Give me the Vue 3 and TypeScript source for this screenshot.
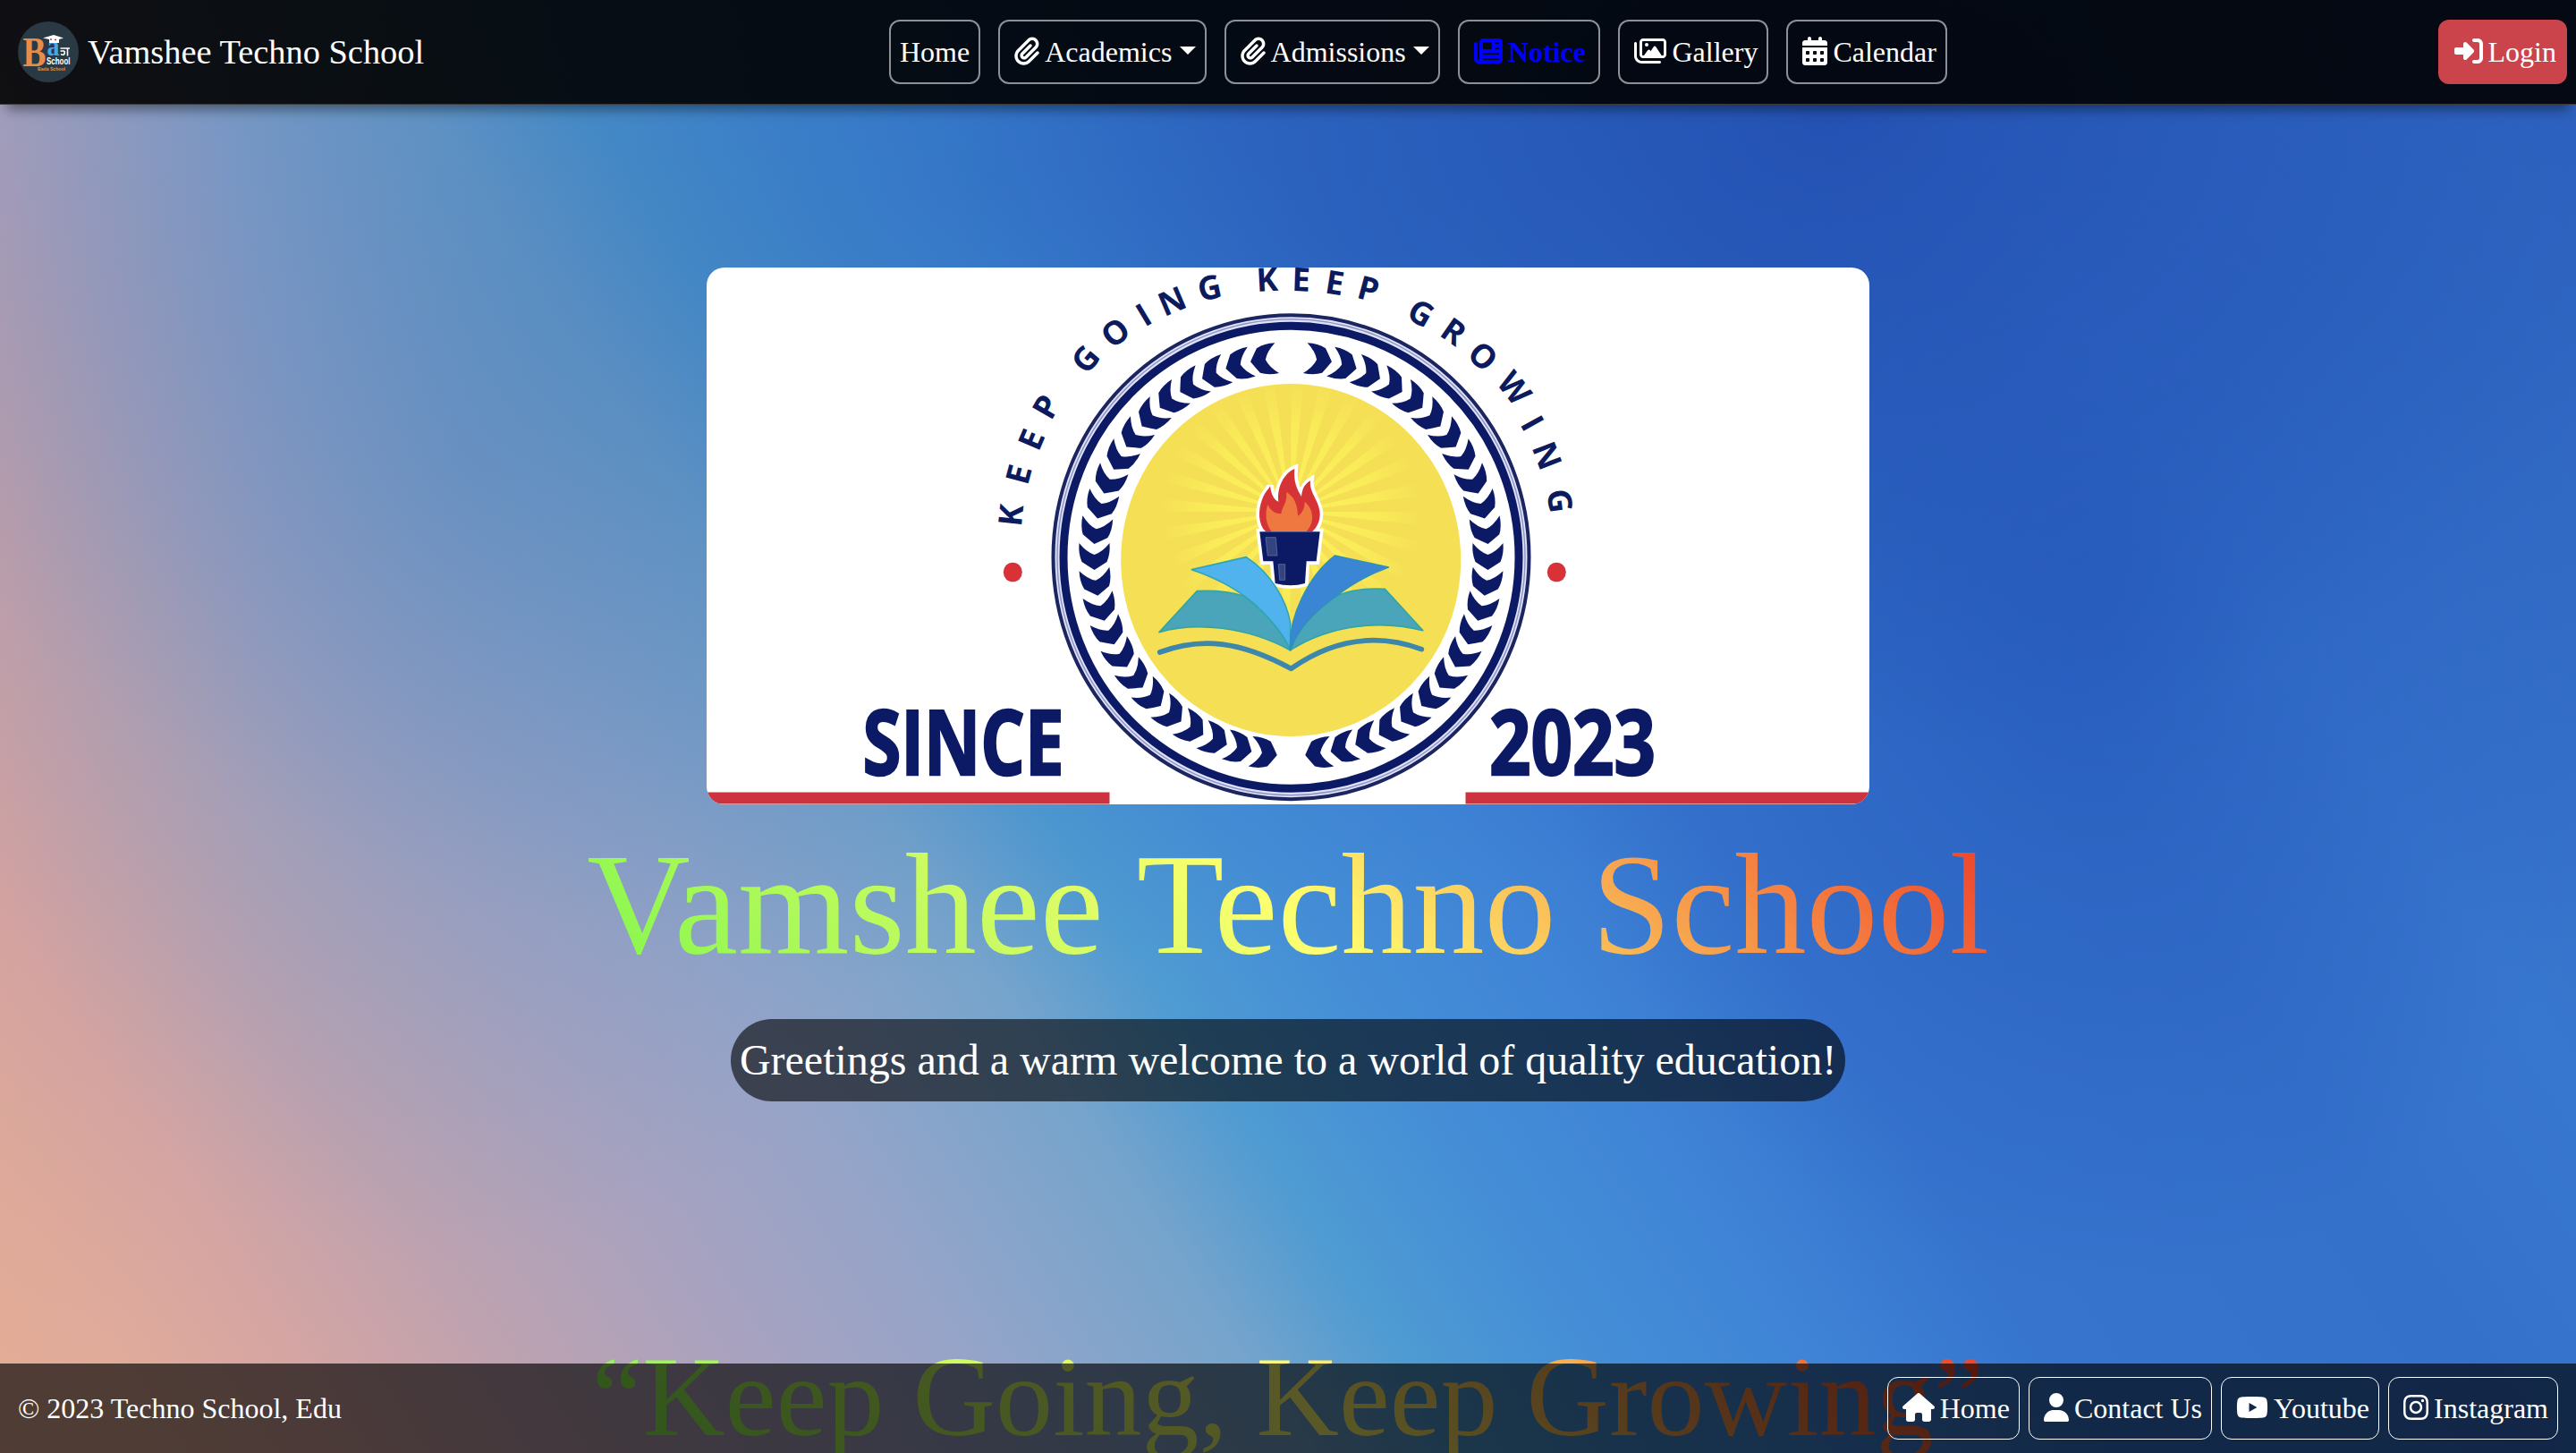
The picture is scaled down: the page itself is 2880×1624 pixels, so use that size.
<script setup lang="ts">
interface IconShape { w: number; d: string }
interface NavItem { label: string; icon?: string; caret?: boolean; notice?: boolean }

const icons: Record<string, IconShape> = {
  clip: { w: 448, d: 'M364.2 83.8c-24.4-24.4-64-24.4-88.4 0l-184 184c-42.1 42.1-42.1 110.3 0 152.4s110.3 42.1 152.4 0l152-152c10.9-10.9 28.7-10.9 39.6 0s10.9 28.7 0 39.6l-152 152c-64 64-167.6 64-231.6 0s-64-167.6 0-231.6l184-184c46.3-46.3 121.3-46.3 167.6 0s46.3 121.3 0 167.6l-176 176c-28.6 28.6-75 28.6-103.6 0s-28.6-75 0-103.6l144-144c10.9-10.9 28.7-10.9 39.6 0s10.9 28.7 0 39.6l-144 144c-6.7 6.7-6.7 17.7 0 24.4s17.7 6.7 24.4 0l176-176c24.4-24.4 24.4-64 0-88.4z' },
  news: { w: 512, d: 'M96 96c0-35.3 28.7-64 64-64H448c35.3 0 64 28.7 64 64V416c0 35.3-28.7 64-64 64H80c-44.2 0-80-35.8-80-80V128c0-17.7 14.3-32 32-32s32 14.3 32 32V400c0 8.8 7.2 16 16 16s16-7.2 16-16V96zm64 24v80c0 13.3 10.7 24 24 24H296c13.3 0 24-10.7 24-24V120c0-13.3-10.7-24-24-24H184c-13.3 0-24 10.7-24 24zm208-8c0 8.8 7.2 16 16 16h48c8.8 0 16-7.2 16-16s-7.2-16-16-16H384c-8.8 0-16 7.2-16 16zm0 96c0 8.8 7.2 16 16 16h48c8.8 0 16-7.2 16-16s-7.2-16-16-16H384c-8.8 0-16 7.2-16 16zM160 304c0 8.8 7.2 16 16 16H432c8.8 0 16-7.2 16-16s-7.2-16-16-16H176c-8.8 0-16 7.2-16 16zm0 96c0 8.8 7.2 16 16 16H432c8.8 0 16-7.2 16-16s-7.2-16-16-16H176c-8.8 0-16 7.2-16 16z' },
  images: { w: 576, d: 'M160 80H512c8.8 0 16 7.2 16 16V320c0 8.8-7.2 16-16 16H490.8L388.1 178.9c-4.4-6.8-12-10.9-20.1-10.9s-15.7 4.1-20.1 10.9l-52.2 79.8-12.4-16.9c-4.5-6.2-11.7-9.8-19.4-9.8s-14.8 3.6-19.4 9.8L175.6 336H160c-8.8 0-16-7.2-16-16V96c0-8.8 7.2-16 16-16zM96 96V320c0 35.3 28.7 64 64 64H512c35.3 0 64-28.7 64-64V96c0-35.3-28.7-64-64-64H160c-35.3 0-64 28.7-64 64zM48 120c0-13.3-10.7-24-24-24S0 106.7 0 120V344c0 75.1 60.9 136 136 136H456c13.3 0 24-10.7 24-24s-10.7-24-24-24H136c-48.6 0-88-39.4-88-88V120zm208 24a32 32 0 1 0 -64 0 32 32 0 1 0 64 0z' },
  calendar: { w: 448, d: 'M128 0c17.7 0 32 14.3 32 32V64H288V32c0-17.7 14.3-32 32-32s32 14.3 32 32V64h48c26.5 0 48 21.5 48 48v48H0V112C0 85.5 21.5 64 48 64H96V32c0-17.7 14.3-32 32-32zM0 192H448V464c0 26.5-21.5 48-48 48H48c-26.5 0-48-21.5-48-48V192zm64 80v32c0 8.8 7.2 16 16 16h32c8.8 0 16-7.2 16-16V272c0-8.8-7.2-16-16-16H80c-8.8 0-16 7.2-16 16zm128 0v32c0 8.8 7.2 16 16 16h32c8.8 0 16-7.2 16-16V272c0-8.8-7.2-16-16-16H208c-8.8 0-16 7.2-16 16zm144-16c-8.8 0-16 7.2-16 16v32c0 8.8 7.2 16 16 16h32c8.8 0 16-7.2 16-16V272c0-8.8-7.2-16-16-16H336zM64 400v32c0 8.8 7.2 16 16 16h32c8.8 0 16-7.2 16-16V400c0-8.8-7.2-16-16-16H80c-8.8 0-16 7.2-16 16zm144-16c-8.8 0-16 7.2-16 16v32c0 8.8 7.2 16 16 16h32c8.8 0 16-7.2 16-16V400c0-8.8-7.2-16-16-16H208zm112 16v32c0 8.8 7.2 16 16 16h32c8.8 0 16-7.2 16-16V400c0-8.8-7.2-16-16-16H336c-8.8 0-16 7.2-16 16z' },
  login: { w: 512, d: 'M217.9 105.9L340.7 228.7c7.2 7.2 11.3 17.1 11.3 27.3s-4.1 20.1-11.3 27.3L217.9 406.1c-6.4 6.4-15 9.9-24 9.9c-18.7 0-33.9-15.2-33.9-33.9l0-62.1L32 320c-17.7 0-32-14.3-32-32l0-64c0-17.7 14.3-32 32-32l128 0 0-62.1c0-18.7 15.2-33.9 33.9-33.9c9 0 17.6 3.6 24 9.9zM352 416l64 0c17.7 0 32-14.3 32-32l0-256c0-17.7-14.3-32-32-32l-64 0c-17.7 0-32-14.3-32-32s14.3-32 32-32l64 0c53 0 96 43 96 96l0 256c0 53-43 96-96 96l-64 0c-17.7 0-32-14.3-32-32s14.3-32 32-32z' },
  house: { w: 576, d: 'M575.8 255.5c0 18-15 32.1-32 32.1h-32l.7 160.2c0 2.7-.2 5.4-.5 8.1V472c0 22.1-17.9 40-40 40H456c-1.1 0-2.2 0-3.3-.1c-1.4 .1-2.8 .1-4.2 .1H416 392c-22.1 0-40-17.9-40-40V448 384c0-17.7-14.3-32-32-32H256c-17.7 0-32 14.3-32 32v64 24c0 22.1-17.9 40-40 40H160 128.1c-1.5 0-3-.1-4.5-.2c-1.2 .1-2.4 .2-3.6 .2H104c-22.1 0-40-17.9-40-40V360c0-.9 0-1.9 .1-2.8V287.6H32c-18 0-32-14-32-32.1c0-9 3-17 10-24L266.4 8c7-7 15-8 22-8s15 2 21 7L564.8 231.5c8 7 12 15 11 24z' },
  user: { w: 448, d: 'M224 256A128 128 0 1 0 224 0a128 128 0 1 0 0 256zm-45.7 48C79.8 304 0 383.8 0 482.3C0 498.7 13.3 512 29.7 512H418.3c16.4 0 29.7-13.3 29.7-29.7C448 383.8 368.2 304 269.7 304H178.3z' },
  youtube: { w: 576, d: 'M549.655 124.083c-6.281-23.65-24.787-42.276-48.284-48.597C458.781 64 288 64 288 64S117.22 64 74.629 75.486c-23.497 6.322-42.003 24.947-48.284 48.597-11.412 42.867-11.412 132.305-11.412 132.305s0 89.438 11.412 132.305c6.281 23.65 24.787 41.5 48.284 47.821C117.22 448 288 448 288 448s170.78 0 213.371-11.486c23.497-6.321 42.003-24.171 48.284-47.821 11.412-42.867 11.412-132.305 11.412-132.305s0-89.438-11.412-132.305zm-317.51 213.508V175.185l142.739 81.205-142.739 81.201z' },
  instagram: { w: 448, d: 'M224.1 141c-63.6 0-114.9 51.3-114.9 114.9s51.3 114.9 114.9 114.9S339 319.5 339 255.9 287.7 141 224.1 141zm0 189.6c-41.1 0-74.7-33.5-74.7-74.7s33.5-74.7 74.7-74.7 74.7 33.5 74.7 74.7-33.6 74.7-74.7 74.7zm146.4-194.3c0 14.9-12 26.8-26.8 26.8-14.9 0-26.8-12-26.8-26.8s12-26.8 26.8-26.8 26.8 12 26.8 26.8zm76.1 27.2c-1.7-35.9-9.9-67.7-36.2-93.9-26.2-26.2-58-34.4-93.9-36.2-37-2.1-147.9-2.1-184.9 0-35.8 1.7-67.6 9.9-93.9 36.1s-34.4 58-36.2 93.9c-2.1 37-2.1 147.9 0 184.9 1.7 35.9 9.9 67.7 36.2 93.9s58 34.4 93.9 36.2c37 2.1 147.9 2.1 184.9 0 35.9-1.7 67.7-9.9 93.9-36.2 26.2-26.2 34.4-58 36.2-93.9 2.1-37 2.1-147.8 0-184.8zM398.8 388c-7.8 19.6-22.9 34.7-42.6 42.6-29.5 11.7-99.5 9-132.1 9s-102.7 2.6-132.1-9c-19.6-7.8-34.7-22.9-42.6-42.6-11.7-29.5-9-99.5-9-132.1s-2.6-102.7 9-132.1c7.8-19.6 22.9-34.7 42.6-42.6 29.5-11.7 99.5-9 132.1-9s102.7-2.6 132.1 9c19.6 7.8 34.7 22.9 42.6 42.6 11.7 29.5 9 99.5 9 132.1s2.7 102.7-9 132.1z' },
}

const nav: NavItem[] = [
  { label: 'Home' },
  { label: 'Academics', icon: 'clip', caret: true },
  { label: 'Admissions', icon: 'clip', caret: true },
  { label: 'Notice', icon: 'news', notice: true },
  { label: 'Gallery', icon: 'images' },
  { label: 'Calendar', icon: 'calendar' },
]

const footerLinks: NavItem[] = [
  { label: 'Home', icon: 'house' },
  { label: 'Contact Us', icon: 'user' },
  { label: 'Youtube', icon: 'youtube' },
  { label: 'Instagram', icon: 'instagram' },
]

// Laurel chevrons: 23 per side, running from the top of the ring to its foot.
const chevrons: string[] = []
for (let i = 0; i < 23; i++) {
  const a = 8 + i * 7.455
  const r = (a * Math.PI) / 180
  const dx = 220 * Math.sin(r)
  const y = 622 - 222 * Math.cos(r)
  chevrons.push(`translate(${1443.5 - dx} ${y}) rotate(${90 - a})`)
  chevrons.push(`translate(${1443.5 + dx} ${y}) rotate(${a - 90})`)
}

// Sun rays behind the torch.
const rays: string[] = []
for (let i = 0; i < 28; i++) {
  const a = (i * 360) / 28 + 3
  const p = (deg: number) => {
    const r = (deg * Math.PI) / 180
    return `${1443 + 190 * Math.sin(r)},${572 - 190 * Math.cos(r)}`
  }
  rays.push(`1443,572 ${p(a - 2.8)} ${p(a + 2.8)}`)
}

// Motto letters: centre x, centre y, tilt in degrees and half advance width.
const motto: [string, number, number, number, number][] = [
  ['K', 1130, 576, -84, 12], ['E', 1139, 530, -75, 10.5], ['E', 1153, 491, -67, 10.5], ['P', 1169.5, 454.5, -60, 11.5],
  [' ', 1190, 425, -52, 5],
  ['G', 1213.6, 401, -50, 13.5], ['O', 1247, 371.5, -38, 14.5], ['I', 1278.3, 351.7, -31, 6], ['N', 1310, 336.7, -23, 14.5], ['G', 1352.4, 321.6, -12, 13.5],
  [' ', 1385, 315, -10, 5],
  ['K', 1416.6, 312.5, -3, 12], ['E', 1455, 312.5, 2, 10.5], ['E', 1492.7, 316, 9, 10.5], ['P', 1530, 322.8, 15, 11.5],
  [' ', 1560, 335, 20, 5],
  ['G', 1589, 350, 30, 13.5], ['R', 1625.2, 370.4, 35, 12], ['O', 1658, 398.2, 43, 14.5], ['W', 1693.2, 434, 52, 18], ['I', 1713.4, 473, 61, 6], ['N', 1729.500, 509, 69, 14.5], ['G', 1744, 560, 83, 13.5],
]
const mottoText = motto.map((m) => m[0]).join('')
const mottoX: string[] = []
const mottoY: string[] = []
for (const [, cx, cy, deg, hw] of motto) {
  const r = (deg * Math.PI) / 180
  const hh = 13
  mottoX.push((cx - hw * Math.cos(r) - hh * Math.sin(r)).toFixed(1))
  mottoY.push((cy - hw * Math.sin(r) + hh * Math.cos(r)).toFixed(1))
}
const mottoRotate = motto.map((m) => m[3]).join(' ')
</script>

<template>
  <div class="page">
    <header class="navbar">
      <div class="brand">
        <svg class="brand-logo" viewBox="20 24 68 68">
          <circle cx="54" cy="58" r="34" fill="#293a45" />
          <text x="25.5" y="74" class="logo-b" textLength="26" lengthAdjust="spacingAndGlyphs">B</text>
          <text x="52.5" y="62" class="logo-a" textLength="14" lengthAdjust="spacingAndGlyphs">a</text>
          <path d="M48 42.5l12-3.5 11 3.5-5 1.500v4H55v-4z" fill="#fff" />
          <path d="M56 44h2M61 44.5h2" stroke="#c33" stroke-width="1.5" />
          <path d="M67.500 54h10.500M75.500 54v8.500M67.500 57h4.500M72 57c1 4-1 5-4 3.500" fill="none" stroke="#fff" stroke-width="1.6" />
          <text x="52" y="72" class="logo-s" textLength="26.5" lengthAdjust="spacingAndGlyphs">School</text>
          <text x="42" y="79" class="logo-t" textLength="31" lengthAdjust="spacingAndGlyphs">Bada School</text>
        </svg>
        <span>Vamshee Techno School</span>
      </div>
      <nav class="menu">
        <a v-for="n in nav" :key="n.label" class="btn" :class="{ notice: n.notice }"><svg v-if="n.icon" class="ico" :viewBox="`0 0 ${icons[n.icon].w} 512`" :style="{ width: icons[n.icon].w / 16 + 'px' }"><path :d="icons[n.icon].d" /></svg>{{ n.label }}<i v-if="n.caret" class="caret"></i></a>
      </nav>
      <a class="btn login"><svg class="ico" viewBox="0 0 512 512"><path :d="icons.login.d" /></svg>Login</a>
    </header>

    <main class="hero">
      <svg class="crest" viewBox="790 299 1300 600">
        <defs>
          <radialGradient id="rayFade" gradientUnits="userSpaceOnUse" cx="1443" cy="572" r="150">
            <stop offset="0.2" stop-color="#fbef5a" />
            <stop offset="0.6" stop-color="#fbef5a" stop-opacity="0.8" />
            <stop offset="1" stop-color="#fbef5a" stop-opacity="0" />
          </radialGradient>
        </defs>
        <rect x="790" y="299" width="1300" height="600" fill="#fff" />
        <ellipse cx="1443.5" cy="622.7" rx="266" ry="270.5" fill="#dfe2f8" stroke="#1b2560" stroke-width="4" />
        <ellipse cx="1443.5" cy="622.7" rx="261.5" ry="266" fill="none" stroke="#8f96c4" stroke-width="1.5" />
        <ellipse cx="1443.5" cy="622.7" rx="254.5" ry="258.5" fill="#fff" stroke="#0c1a66" stroke-width="9" />
        <path v-for="(t, i) in chevrons" :key="i" :transform="t" d="M-17 -15Q-9 -5 0 -2Q9 -5 17 -15Q18 -3 14 6Q8 10 0 15Q-8 10 -14 6Q-18 -3 -17 -15Z" fill="#0c1a66" />
        <ellipse cx="1443.2" cy="626" rx="190" ry="197" fill="#f5df55" />
        <polygon v-for="(p, i) in rays" :key="'r' + i" :points="p" fill="url(#rayFade)" />
        <g transform="translate(1220 410) scale(0.33333)">
          <path d="M585 552C560 530 558 480 575 440C585 415 597 410 600 398C603 425 612 445 628 452C622 400 650 355 682 342C678 385 690 410 705 435C708 405 718 392 735 382C730 420 765 450 767 490C768 520 755 540 742 552L767 553L755 652L722 652L717 726Q670 740 617 726L610 652L577 652L565 553Z" fill="#fff" stroke="#fff" stroke-width="22" stroke-miterlimit="5" />
          <path d="M585 552C560 530 558 480 575 440C585 415 597 410 600 398C603 425 612 445 628 452C622 400 650 355 682 342C678 385 690 410 705 435C708 405 718 392 735 382C730 420 765 450 767 490C768 520 755 540 742 552Z" fill="#d63336" />
          <path d="M605 552C585 530 582 490 592 462C602 482 615 492 637 493C640 470 658 455 655 420C680 435 692 460 693 500C710 490 716 470 716 452C745 475 752 520 722 552Z" fill="#ee7840" />
          <path d="M565 553L767 553L755 652L722 652L717 726Q670 740 617 726L610 652L577 652Z" fill="#0c1a66" />
          <path d="M585 572H619L624 633H592ZM628 662H650V715H632Z" fill="#33447f" stroke="#6e7cac" stroke-width="2" />
          <path d="M355 752L228 890C350 855 520 870 667 950C640 880 560 800 510 768C460 752 400 750 355 752Z" fill="#4aa5bb" stroke="#35a5a0" stroke-width="5" stroke-linejoin="round" />
          <path d="M668 950C700 840 790 785 830 765C880 745 930 742 985 745L1112 884C980 850 810 860 668 950Z" fill="#4aa5bb" stroke="#35a5a0" stroke-width="5" stroke-linejoin="round" />
          <path d="M337 680L520 638C600 690 655 780 668 860V950C640 880 560 800 510 766C455 725 395 700 337 680Z" fill="#50b3ee" stroke="#2fa6b4" stroke-width="5" stroke-linejoin="round" />
          <path d="M668 950C660 840 730 700 818 633L997 672C920 700 870 730 820 770C750 820 690 880 668 950Z" fill="#3a86d4" stroke="#2f90b8" stroke-width="5" stroke-linejoin="round" />
          <path d="M230 957C370 905 500 920 670 1012C830 900 980 900 1108 947" fill="none" stroke="#3d86ac" stroke-width="17" stroke-linecap="round" stroke-linejoin="round" />
        </g>
        <text class="motto" :x="mottoX.join(' ')" :y="mottoY.join(' ')" :rotate="mottoRotate">{{ mottoText }}</text>
        <ellipse cx="1132.3" cy="639.5" rx="10.5" ry="10.8" fill="#d83238" />
        <ellipse cx="1740.3" cy="639.5" rx="10.5" ry="10.8" fill="#d83238" />
        <text class="since" x="964.5" y="865.5" textLength="225" lengthAdjust="spacingAndGlyphs">SINCE</text>
        <text class="since" x="1665" y="865.5" textLength="186" lengthAdjust="spacingAndGlyphs">2023</text>
        <rect x="790" y="885.5" width="450.5" height="13" fill="#cc333e" />
        <rect x="1638.5" y="885.5" width="451.5" height="13" fill="#cc333e" />
      </svg>
      <h1 class="title">Vamshee Techno School</h1>
      <p class="welcome">Greetings and a warm welcome to a world of quality education!</p>
      <h2 class="quote">“Keep Going, Keep Growing”</h2>
    </main>

    <footer class="footer">
      <span>© 2023 Techno School, Edu</span>
      <div class="links">
        <a v-for="n in footerLinks" :key="n.label" class="btn foot"><svg v-if="n.icon" class="ico" :viewBox="`0 0 ${icons[n.icon].w} 512`" :style="{ width: icons[n.icon].w / 16 + 'px' }"><path :d="icons[n.icon].d" /></svg>{{ n.label }}</a>
      </div>
    </footer>
  </div>
</template>

<style>
body {
  overflow: hidden;
}
</style>

<style scoped>
.page {
  position: relative;
  height: 1624px;
  overflow: hidden;
  box-sizing: border-box;
  font-family: "Liberation Serif", "Times New Roman", serif;
  font-size: 32px;
  line-height: 48px;
  color: #fff;
  background:
    radial-gradient(ellipse 1000px 720px at 2050px 120px, rgba(32, 74, 174, 0.8), rgba(32, 74, 174, 0) 100%),
    radial-gradient(ellipse 620px 760px at 2340px 680px, rgba(34, 84, 184, 0.65), rgba(34, 84, 184, 0) 100%),
    radial-gradient(ellipse 1300px 900px at 1100px 200px, rgba(34, 92, 176, 0.4), rgba(34, 92, 176, 0) 100%),
    radial-gradient(ellipse 620px 900px at 520px 520px, rgba(84, 142, 188, 0.4), rgba(84, 142, 188, 0) 100%),
    radial-gradient(ellipse 300px 1000px at 0px 600px, rgba(205, 150, 150, 0.3), rgba(205, 150, 150, 0) 100%),
    linear-gradient(57deg, #e4ad94 0%, #e0ab9a 5%, #d5a5a2 10%, #bea2b0 16%, #a8a2c0 23%, #93a4c9 30%, #76a4cc 37%, #4f9bd2 41.5%, #4690d6 46%, #3f84d6 53%, #3674ce 60%, #3471cb 72%, #3877cf 80%, #326cc6 90%, #2e62c0 100%);
}

.navbar {
  position: absolute;
  inset: 0 0 auto 0;
  z-index: 2;
  display: flex;
  align-items: center;
  box-sizing: border-box;
  height: 117px;
  padding: 0 10px 0 20px;
  background: rgba(0, 0, 0, 0.9);
  border-bottom: 1px solid #3a3a3a;
  box-shadow: 0 14px 12px -8px rgba(0, 0, 0, 0.4);
}

.brand {
  display: flex;
  align-items: center;
  gap: 10px;
  width: 974px;
  font-size: 38.4px;
  white-space: nowrap;
}

.brand-logo {
  width: 68px;
  height: 68px;
}

.logo-b {
  font: bold 47px "Liberation Serif", serif;
  fill: #e88c4a;
}

.logo-a {
  font: bold 32px "Liberation Serif", serif;
  fill: #46a6ea;
}

.logo-s {
  font: bold 10px "Liberation Sans", sans-serif;
  fill: #fff;
}

.logo-t {
  font: bold 6px "Liberation Sans", sans-serif;
  fill: #e88c4a;
}

.menu {
  display: flex;
  gap: 20px;
}

.btn {
  padding: 10px;
  border: 2px solid rgba(255, 255, 255, 0.55);
  border-radius: 12px;
  white-space: nowrap;
}

.ico {
  width: 32px;
  height: 32px;
  margin: 0 6px;
  vertical-align: -4px;
  fill: currentColor;
}

.caret {
  display: inline-block;
  margin-left: 8.2px;
  vertical-align: 8px;
  border: 9.6px solid transparent;
  border-top-color: #fff;
  border-bottom: 0;
}

.notice {
  padding-right: 14.5px;
  font-weight: bold;
  color: #00f;
}

.login {
  margin-left: auto;
  padding: 12px;
  border: 0;
  background: #cc444b;
}

.hero {
  display: flex;
  flex-direction: column;
  align-items: center;
  padding-top: 299px;
}

.crest {
  flex: none;
  width: 1300px;
  height: 600px;
  border-radius: 20px;
}

.motto {
  font: 700 36.5px "Open Sans", "Noto Sans", sans-serif;
  fill: #0c1a5e;
  white-space: pre;
}

.since {
  font: 700 101px "Open Sans", "Noto Sans", sans-serif;
  fill: #0c1a66;
  stroke: #0c1a66;
  stroke-width: 2.5px;
}

.title,
.quote {
  margin: 16px 0 0;
  font-weight: normal;
  font-size: 160px;
  line-height: 192px;
  white-space: nowrap;
  color: transparent;
  background: linear-gradient(45deg, #80f64c, #ffff70 50%, #ee3c28);
  background-clip: text;
  -webkit-background-clip: text;
}

.welcome {
  margin: 32px 0 0;
  padding: 10px;
  font-size: 48px;
  line-height: 72px;
  border-radius: 46px;
  background: rgba(0, 0, 0, 0.6);
  white-space: nowrap;
}

.quote {
  margin-top: 254px;
  font-size: 128px;
  line-height: 153.6px;
}

.footer {
  position: absolute;
  inset: auto 0 0 0;
  z-index: 2;
  display: flex;
  align-items: center;
  justify-content: space-between;
  box-sizing: border-box;
  height: 100px;
  padding: 0 20px;
  background: rgba(0, 0, 0, 0.65);
}

.links {
  display: flex;
  gap: 10px;
}

.foot {
  border: 1px solid #fff;
}
</style>
